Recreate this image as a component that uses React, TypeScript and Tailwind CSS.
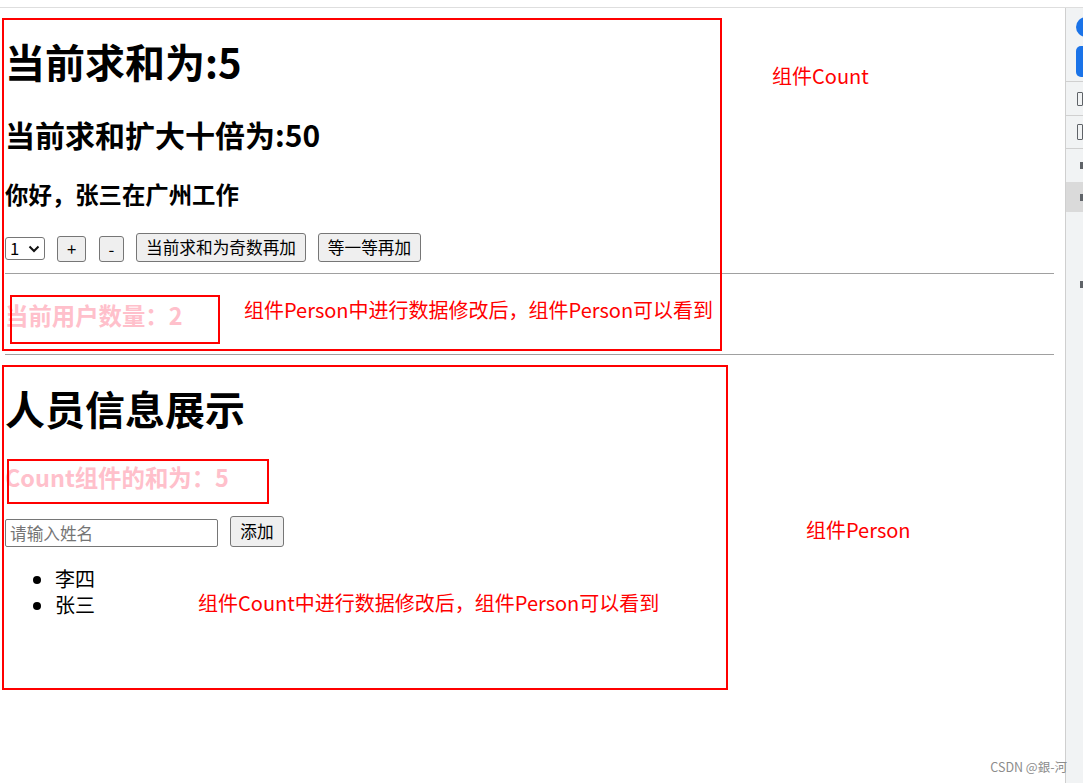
import React from "react";

function Btn({ w, h, label, cls = "" }: { w: string; h: string; label: string; cls?: string }) {
  return (
    <div
      className={`flex items-center justify-center bg-[#efefef] border border-[#767676] rounded-[3px] text-[16.67px] leading-none text-black ${w} ${h} ${cls}`}
    >
      {label}
    </div>
  );
}

export default function App() {
  return (
    <div className="relative w-[1083px] h-[783px] overflow-hidden bg-white text-black font-['Noto_Sans_CJK_SC',sans-serif]">
      <div className="h-[8px] border-b border-[#dedede]" />
      <div className="flex h-[775px]">
        <main className="flex-1 pl-[5px] pr-[11px]">
          <div className="mt-[27px] h-[52px] leading-[52px] text-[40px] font-bold">当前求和为:5</div>
          <div className="mt-[27px] h-[40px] leading-[40px] text-[30px] font-bold">当前求和扩大十倍为:50</div>
          <div className="mt-[24px] h-[32px] leading-[32px] text-[23.4px] font-bold">你好，张三在广州工作</div>
          <div className="mt-[23px] h-[29px] flex items-end">
            <div className="mb-[2px] w-[40px] h-[23px] flex items-center justify-between pl-[4px] pr-[4px] border border-[#767676] rounded-[3px] bg-white text-[16.67px] leading-none">
              <span>1</span>
              <svg width="12" height="8" viewBox="0 0 12 8" fill="none">
                <path d="M1.5 1.5 L6 6 L10.5 1.5" stroke="#111" strokeWidth="2" />
              </svg>
            </div>
            <Btn w="w-[29px]" h="h-[26px]" label="+" cls="ml-[12px]" />
            <Btn w="w-[25px]" h="h-[26px]" label="-" cls="ml-[13px]" />
            <Btn w="w-[170px]" h="h-[29px]" label="当前求和为奇数再加" cls="ml-[12px]" />
            <Btn w="w-[103px]" h="h-[29px]" label="等一等再加" cls="ml-[12px]" />
          </div>
          <div className="mt-[11px] border-t border-[#a0a0a0]" />
          <div className="mt-[25px] h-[32px] leading-[32px] text-[23.4px] font-bold text-[#ffc0cb]">当前用户数量：2</div>
          <div className="mt-[23px] border-t border-[#a0a0a0]" />
          <div className="mt-[27px] h-[52px] leading-[52px] text-[40px] font-bold">人员信息展示</div>
          <div className="mt-[27px] h-[32px] leading-[32px] text-[23.4px] font-bold text-[#ffc0cb]">Count组件的和为：5</div>
          <div className="mt-[23px] h-[31px] flex items-end">
            <input
              className="w-[213px] h-[28px] border border-[#767676] rounded-[2px] pl-[4px] text-[16.67px] outline-none placeholder:text-[#757575]"
              placeholder="请输入姓名"
            />
            <Btn w="w-[54px]" h="h-[31px]" label="添加" cls="ml-[12px]" />
          </div>
          <ul className="mt-[19px] list-disc pl-[50px] text-[20px] leading-[26px]">
            <li>李四</li>
            <li>张三</li>
          </ul>
        </main>
        <aside className="w-[18px] border-l border-[#cfcfcf] bg-[#f1f3f4] flex flex-col overflow-hidden">
          <div className="ml-[10px] mt-[9px] w-[20px] h-[20px] shrink-0 rounded-full bg-[#1a73e8]" />
          <div className="ml-[10px] mt-[9px] w-[20px] h-[31px] shrink-0 rounded-[5px] bg-[#1a73e8]" />
          <div className="mt-[4px] h-[34px] shrink-0 border-t border-[#d0d0d0] flex items-center pl-[11px]">
            <div className="w-[10px] h-[14px] border-[1.5px] border-[#5f6368] rounded-[1px]" />
          </div>
          <div className="h-[33px] shrink-0 border-t border-[#d0d0d0] flex items-center pl-[11px]">
            <div className="w-[10px] h-[16px] border-[1.5px] border-[#5f6368] rounded-[1px]" />
          </div>
          <div className="h-[34px] shrink-0 border-t border-[#d0d0d0] flex items-center pl-[14px]">
            <div className="w-[4px] h-[7px] bg-[#5f6368]" />
          </div>
          <div className="h-[30px] shrink-0 bg-[#dadada] flex items-center pl-[14px]">
            <div className="w-[4px] h-[7px] bg-[#5f6368]" />
          </div>
          <div className="mt-[69px] h-[7px] shrink-0 pl-[14px]">
            <div className="w-[4px] h-[7px] bg-[#5f6368]" />
          </div>
        </aside>
      </div>

      {/* annotations */}
      <div className="absolute left-[2px] top-[18px] w-[720px] h-[333px] border-2 border-[#ff0000]" />
      <div className="absolute left-[10px] top-[295px] w-[210px] h-[49px] border-2 border-[#ff0000]" />
      <div className="absolute left-[2px] top-[365px] w-[726px] h-[325px] border-2 border-[#ff0000]" />
      <div className="absolute left-[7px] top-[459px] w-[262px] h-[45px] border-2 border-[#ff0000]" />

      <div className="absolute left-[772px] top-[62px] text-[20px] leading-[28px] text-[#ff0000]">组件Count</div>
      <div className="absolute left-[244px] top-[296px] text-[20px] leading-[28px] text-[#ff0000]">组件Person中进行数据修改后，组件Person可以看到</div>
      <div className="absolute left-[806px] top-[516px] text-[20px] leading-[28px] text-[#ff0000]">组件Person</div>
      <div className="absolute left-[198px] top-[589px] text-[20px] leading-[28px] text-[#ff0000]">组件Count中进行数据修改后，组件Person可以看到</div>

      <div className="absolute right-[16px] top-[758px] text-[12.5px] leading-[18px] text-[#8c8c8c]">CSDN @銀-河</div>
    </div>
  );
}
